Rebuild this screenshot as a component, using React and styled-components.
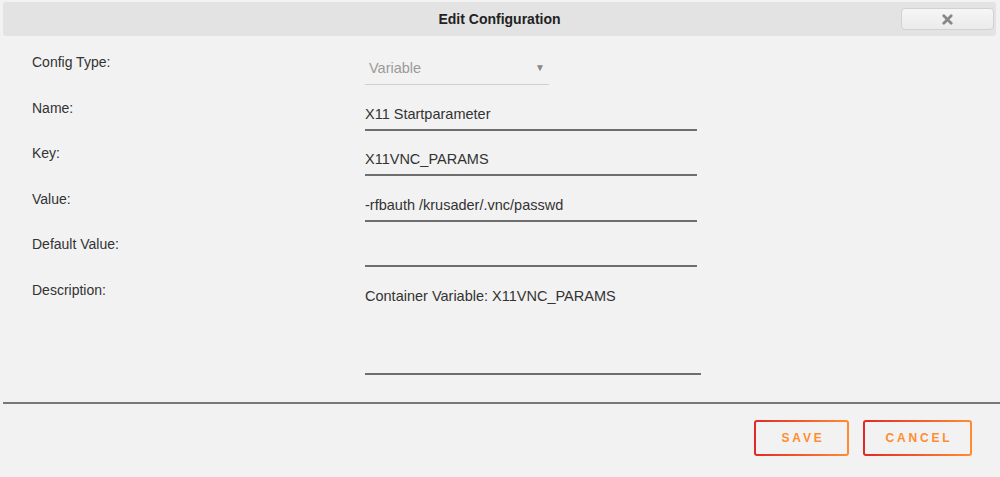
import styled, { createGlobalStyle } from "styled-components";

const GlobalStyle = createGlobalStyle`
  html, body {
    margin: 0;
    padding: 0;
    background: #f2f2f2;
  }
  body {
    font-family: "Liberation Sans", Arial, sans-serif;
    color: #333;
  }
`

const Dialog = styled.div`
  width: 1000px;
  height: 477px;
  box-sizing: border-box;
  padding-top: 2px;
  background: #f2f2f2;
  display: flex;
  flex-direction: column;
`

const TitleBar = styled.div`
  position: relative;
  margin: 0 4px 0 3px;
  height: 34px;
  border-radius: 3px;
  background: #e3e3e3;
  display: flex;
  align-items: center;
  justify-content: center;
  font-size: 14px;
  font-weight: 700;
  color: #222;
`

const CloseButton = styled.button`
  position: absolute;
  right: 2px;
  top: 6px;
  width: 93px;
  height: 22px;
  box-sizing: border-box;
  border: 1px solid #d2d2d2;
  border-radius: 4px;
  background: linear-gradient(#f6f6f6, #ebebeb);
  display: flex;
  align-items: center;
  justify-content: center;
  padding: 0;
  cursor: pointer;
`

const Form = styled.div`
  padding: 14px 0 0 32px;
  display: flex;
  flex-direction: column;
`

const Row = styled.div`
  display: grid;
  grid-template-columns: 333px 1fr;
  height: ${(p) => p.$height || "45.5px"};
`

const Label = styled.div`
  font-size: 14px;
  line-height: 20px;
  margin-top: 2px;
  color: #333;
`

const Field = styled.div`
  box-sizing: border-box;
  width: ${(p) => p.$width || "332px"};
  height: ${(p) => p.$height || "35px"};
  padding: 8px 0 0 0;
  font-size: 14.5px;
  line-height: 20px;
  color: #333;
  border-bottom: 2px solid #6e6e6e;
  white-space: nowrap;
`

const Select = styled(Field)`
  width: 184px;
  padding: 8px 4px 0 4px;
  color: #9a9a9a;
  border-bottom: 1px solid #d0d0d0;
  display: flex;
  justify-content: space-between;
  align-items: flex-start;
`

const Arrow = styled.span`
  font-size: 10px;
  line-height: 20px;
  color: #888;
`

const Divider = styled.div`
  margin: 27px 0 0 3px;
  height: 2px;
  background: #777;
`

const Footer = styled.div`
  display: flex;
  justify-content: flex-end;
  gap: 14px;
  padding: 16px 28px 0 0;
`

const ActionButton = styled.button`
  width: ${(p) => p.$width}px;
  height: 36px;
  box-sizing: border-box;
  padding: 0 0 0 3px;
  border: 2px solid transparent;
  border-radius: 3px;
  background:
    linear-gradient(#f2f2f2, #f2f2f2) padding-box,
    linear-gradient(90deg, #e22828, #ff8d30) border-box;
  color: #ff8d30;
  font-family: "Liberation Sans", Arial, sans-serif;
  font-size: 12px;
  font-weight: 700;
  letter-spacing: 2.8px;
  cursor: pointer;
`

const CloseIcon = () => (
  <svg width="11" height="11" viewBox="0 0 11 11">
    <path d="M1.8 1.8 L9.2 9.2 M9.2 1.8 L1.8 9.2" stroke="#888" strokeWidth="2.8" strokeLinecap="round" />
  </svg>
)

const fields = [
  { label: "Name:", value: "X11 Startparameter" },
  { label: "Key:", value: "X11VNC_PARAMS" },
  { label: "Value:", value: "-rfbauth /krusader/.vnc/passwd" },
  { label: "Default Value:", value: "" },
]

export default function App() {
  return (
    <>
      <GlobalStyle />
      <Dialog>
        <TitleBar>
          Edit Configuration
          <CloseButton><CloseIcon /></CloseButton>
        </TitleBar>

        <Form>
          <Row>
            <Label>Config Type:</Label>
            <Select>
              Variable
              <Arrow>▼</Arrow>
            </Select>
          </Row>
          {fields.map((f) => (
            <Row key={f.label}>
              <Label>{f.label}</Label>
              <Field>{f.value}</Field>
            </Row>
          ))}
          <Row $height="97px">
            <Label>Description:</Label>
            <Field $width="336px" $height="97.5px">Container Variable: X11VNC_PARAMS</Field>
          </Row>
        </Form>

        <Divider />

        <Footer>
          <ActionButton $width={95}>SAVE</ActionButton>
          <ActionButton $width={109}>CANCEL</ActionButton>
        </Footer>
      </Dialog>
    </>
  )
}
